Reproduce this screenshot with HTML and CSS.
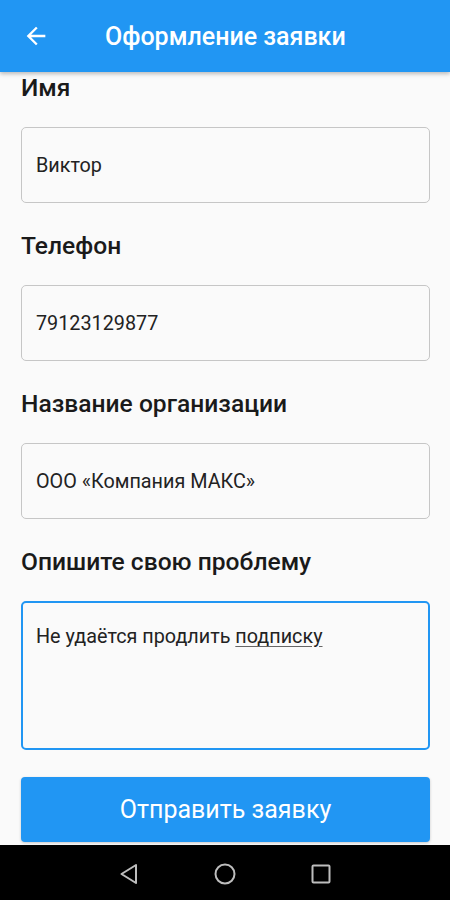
FILE: index.html
```html
<!DOCTYPE html>
<html lang="ru">
<head>
<meta charset="utf-8">
<title>Оформление заявки</title>
<link rel="stylesheet" href="styles.css">
</head>
<body>
<div class="screen">
  <header class="appbar">
    <svg class="back" viewBox="0 0 24 24" width="28" height="28"><path d="M20 11H7.83l5.59-5.59L12 4l-8 8 8 8 1.41-1.41L7.83 13H20v-2z" fill="#fff"/></svg>
    <h1 class="title">Оформление заявки</h1>
  </header>
  <main class="content">
    <div class="field first">
      <div class="label">Имя</div>
      <div class="input">Виктор</div>
    </div>
    <div class="field">
      <div class="label">Телефон</div>
      <div class="input">79123129877</div>
    </div>
    <div class="field">
      <div class="label">Название организации</div>
      <div class="input">ООО «Компания МАКС»</div>
    </div>
    <div class="field">
      <div class="label">Опишите свою проблему</div>
      <div class="textarea">Не удаётся продлить <span class="spell">подписку</span></div>
    </div>
    <button class="submit">Отправить заявку</button>
  </main>
  <nav class="navbar">
    <svg viewBox="0 0 24 24" width="24" height="24"><path d="M19 3 L4.5 12 L19 21 Z" fill="none" stroke="#bdbdbd" stroke-width="2" stroke-linejoin="round"/></svg>
    <svg viewBox="0 0 24 24" width="24" height="24"><circle cx="12" cy="12" r="9.5" fill="none" stroke="#bdbdbd" stroke-width="2"/></svg>
    <svg viewBox="0 0 24 24" width="24" height="24"><rect x="3.5" y="3.5" width="17" height="17" rx="1" fill="none" stroke="#bdbdbd" stroke-width="2"/></svg>
  </nav>
</div>
</body>
</html>
```

FILE: styles.css
```css
* { box-sizing: border-box; }
html, body { margin: 0; padding: 0; }
body {
  font-family: Roboto, "Noto Sans", sans-serif;
  background: #fafafa;
}
.screen {
  width: 450px;
  height: 900px;
  display: flex;
  flex-direction: column;
  overflow: hidden;
}
.appbar {
  height: 72px;
  flex: none;
  background: #2196f3;
  display: flex;
  align-items: center;
  padding-left: 22px;
  box-shadow: 0 2px 4px rgba(0,0,0,0.25);
  position: relative;
  z-index: 1;
}
.back { flex: none; }
.title {
  margin: 0 0 0 55px;
  font-size: 25px;
  font-weight: 500;
  color: #fff;
}
.content {
  flex: 1;
  overflow: hidden;
  padding: 0 20px 0 21px;
  display: flex;
  flex-direction: column;
}
.field { display: flex; flex-direction: column; }
.label {
  height: 24px;
  line-height: 24px;
  font-size: 24.6px;
  font-weight: 500;
  color: #1a1a1a;
  margin: 31px 0 27px 0;
}
.field.first .label { margin-top: 4px; }
.input {
  height: 76px;
  border: 1.5px solid #c6c6c6;
  border-radius: 5px;
  display: flex;
  align-items: center;
  padding-left: 14px;
  font-size: 19.8px;
  color: #222;
}
.textarea {
  height: 149px;
  border: 2px solid #2196f3;
  border-radius: 5px;
  padding: 21px 0 0 13px;
  font-size: 19.8px;
  line-height: 26px;
  color: #222;
}
.spell { text-decoration: underline; text-decoration-color: #666; text-underline-offset: 3px; }
.submit {
  margin-top: 27px;
  height: 65px;
  flex: none;
  border: none;
  border-radius: 4px;
  background: #2196f3;
  color: #fff;
  font-family: Roboto, "Noto Sans", sans-serif;
  font-size: 25px;
  box-shadow: 0 1px 3px rgba(0,0,0,0.2);
}
.navbar {
  height: 55px;
  flex: none;
  background: #000;
  display: flex;
  align-items: center;
  justify-content: center;
  gap: 72px;
  padding-top: 2px;
}
```
